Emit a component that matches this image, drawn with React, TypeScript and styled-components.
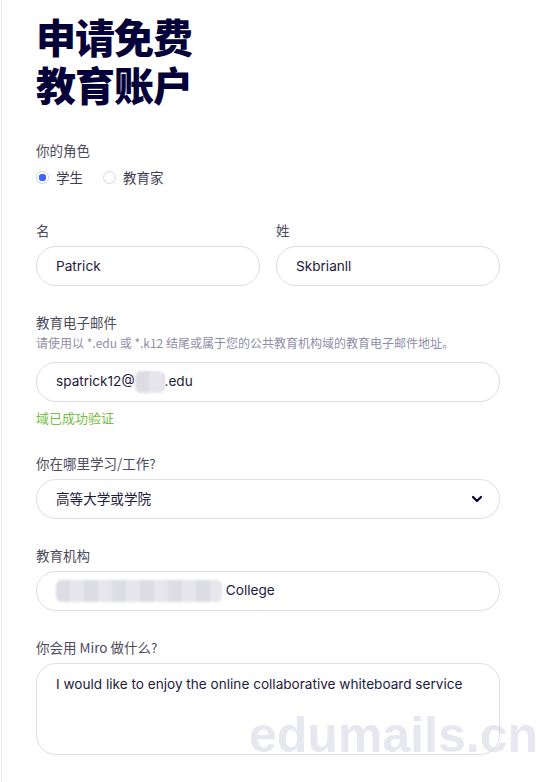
import React from 'react';
import styled, { createGlobalStyle } from 'styled-components';

const GlobalStyle = createGlobalStyle`
    html, body {
        margin: 0;
        padding: 0;
        background: #ffffff;
    }
    body {
        font-family: Inter, "Noto Sans CJK SC", sans-serif;
        color: #050038;
    }
`;

const Page = styled.div`
    position: relative;
    margin-left: 1px;
    border-left: 1px solid #ebebf0;
    min-height: 782px;
    box-sizing: border-box;
    padding: 12px 0 0 34px;
    overflow: hidden;
`;

const Title = styled.h1`
    margin: 0;
    font-family: "Noto Sans CJK SC", sans-serif;
    font-size: 40px;
    font-weight: 900;
    line-height: 48px;
    color: #050038;
    letter-spacing: -1px;
`;

const Form = styled.form`
    width: 464px;
    margin-top: 32px;
    display: flex;
    flex-direction: column;
    gap: 26px;
`;

const Field = styled.div`
    display: flex;
    flex-direction: column;
`;

const Row = styled.div`
    display: grid;
    grid-template-columns: 1fr 1fr;
    gap: 16px;
    margin-top: 6px;
`;

const Label = styled.label`
    font-family: "Noto Sans CJK SC", sans-serif;
    font-size: 13.5px;
    line-height: 20px;
    color: #4b4b5c;
    margin-bottom: 6px;
`;

const Hint = styled.div`
    font-family: "Noto Sans CJK SC", sans-serif;
    font-size: 12px;
    line-height: 18px;
    color: #8f8ea6;
    margin: -4px 0 10px;
`;

const Success = styled.div`
    font-family: "Noto Sans CJK SC", sans-serif;
    font-size: 13px;
    line-height: 18px;
    color: #75c043;
    margin-top: 7px;
`;

const Input = styled.div<{ $multiline?: boolean }>`
    box-sizing: border-box;
    height: ${(p) => (p.$multiline ? '92px' : '40px')};
    border: 1px solid #dedde6;
    border-radius: 20px;
    padding: ${(p) => (p.$multiline ? '10px 19px' : '0 16px 0 19px')};
    display: flex;
    align-items: ${(p) => (p.$multiline ? 'flex-start' : 'center')};
    justify-content: space-between;
    font-family: Inter, "Noto Sans CJK SC", sans-serif;
    font-size: 13.6px;
    line-height: 20px;
    color: #1c1a3d;
    background: #fff;
`;

const Blur = styled.span<{ $w: number }>`
    display: inline-block;
    width: ${(p) => p.$w}px;
    height: 22px;
    vertical-align: middle;
    background: repeating-linear-gradient(90deg, #dcdce3 0 14px, #e6e6ec 14px 28px);
    filter: blur(1px);
    border-radius: 6px;
`;

const Radios = styled.div`
    display: flex;
    align-items: center;
    gap: 20px;
    height: 22px;
`;

const RadioItem = styled.span`
    display: flex;
    align-items: center;
    gap: 7px;
    font-family: "Noto Sans CJK SC", sans-serif;
    font-size: 13.5px;
    color: #3d3c52;
`;

const RadioDot = styled.span<{ $on?: boolean }>`
    box-sizing: border-box;
    width: 13px;
    height: 13px;
    border-radius: 50%;
    border: 1px solid ${(p) => (p.$on ? '#c9cff7' : '#d8d8e0')};
    background: ${(p) => (p.$on ? 'radial-gradient(circle, #4262ff 0 3.5px, #fff 4px)' : '#fff')};
`;

const Watermark = styled.div`
    position: absolute;
    left: 247px;
    top: 705px;
    font-family: "Liberation Sans", Arial, sans-serif;
    font-weight: 700;
    font-size: 50px;
    line-height: 60px;
    color: rgba(215, 215, 228, 0.6);
    pointer-events: none;
`;

const Chevron = () => (
    <svg width="12" height="8" viewBox="0 0 12 8">
        <path d="M2 2 L6 6 L10 2" fill="none" stroke="#050038" strokeWidth="2.2" strokeLinecap="round" strokeLinejoin="round" />
    </svg>
);

export default function App() {
    return (
        <Page>
            <GlobalStyle />
            <Title>
                申请免费
                <br />
                教育账户
            </Title>
            <Form>
                <Field>
                    <Label>你的角色</Label>
                    <Radios>
                        <RadioItem><RadioDot $on />学生</RadioItem>
                        <RadioItem><RadioDot />教育家</RadioItem>
                    </Radios>
                </Field>
                <Row>
                    <Field>
                        <Label>名</Label>
                        <Input>Patrick</Input>
                    </Field>
                    <Field>
                        <Label>姓</Label>
                        <Input>Skbrianll</Input>
                    </Field>
                </Row>
                <Field>
                    <Label>教育电子邮件</Label>
                    <Hint>请使用以 *.edu 或 *.k12 结尾或属于您的公共教育机构域的教育电子邮件地址。</Hint>
                    <Input>
                        <span>spatrick12@<Blur $w={30} />.edu</span>
                    </Input>
                    <Success>域已成功验证</Success>
                </Field>
                <Field>
                    <Label>你在哪里学习/工作?</Label>
                    <Input>
                        <span>高等大学或学院</span>
                        <Chevron />
                    </Input>
                </Field>
                <Field>
                    <Label>教育机构</Label>
                    <Input>
                        <span><Blur $w={166} /> College</span>
                    </Input>
                </Field>
                <Field>
                    <Label>你会用 Miro 做什么?</Label>
                    <Input $multiline>I would like to enjoy the online collaborative whiteboard service</Input>
                </Field>
            </Form>
            <Watermark>edumails.cn</Watermark>
        </Page>
    );
}
